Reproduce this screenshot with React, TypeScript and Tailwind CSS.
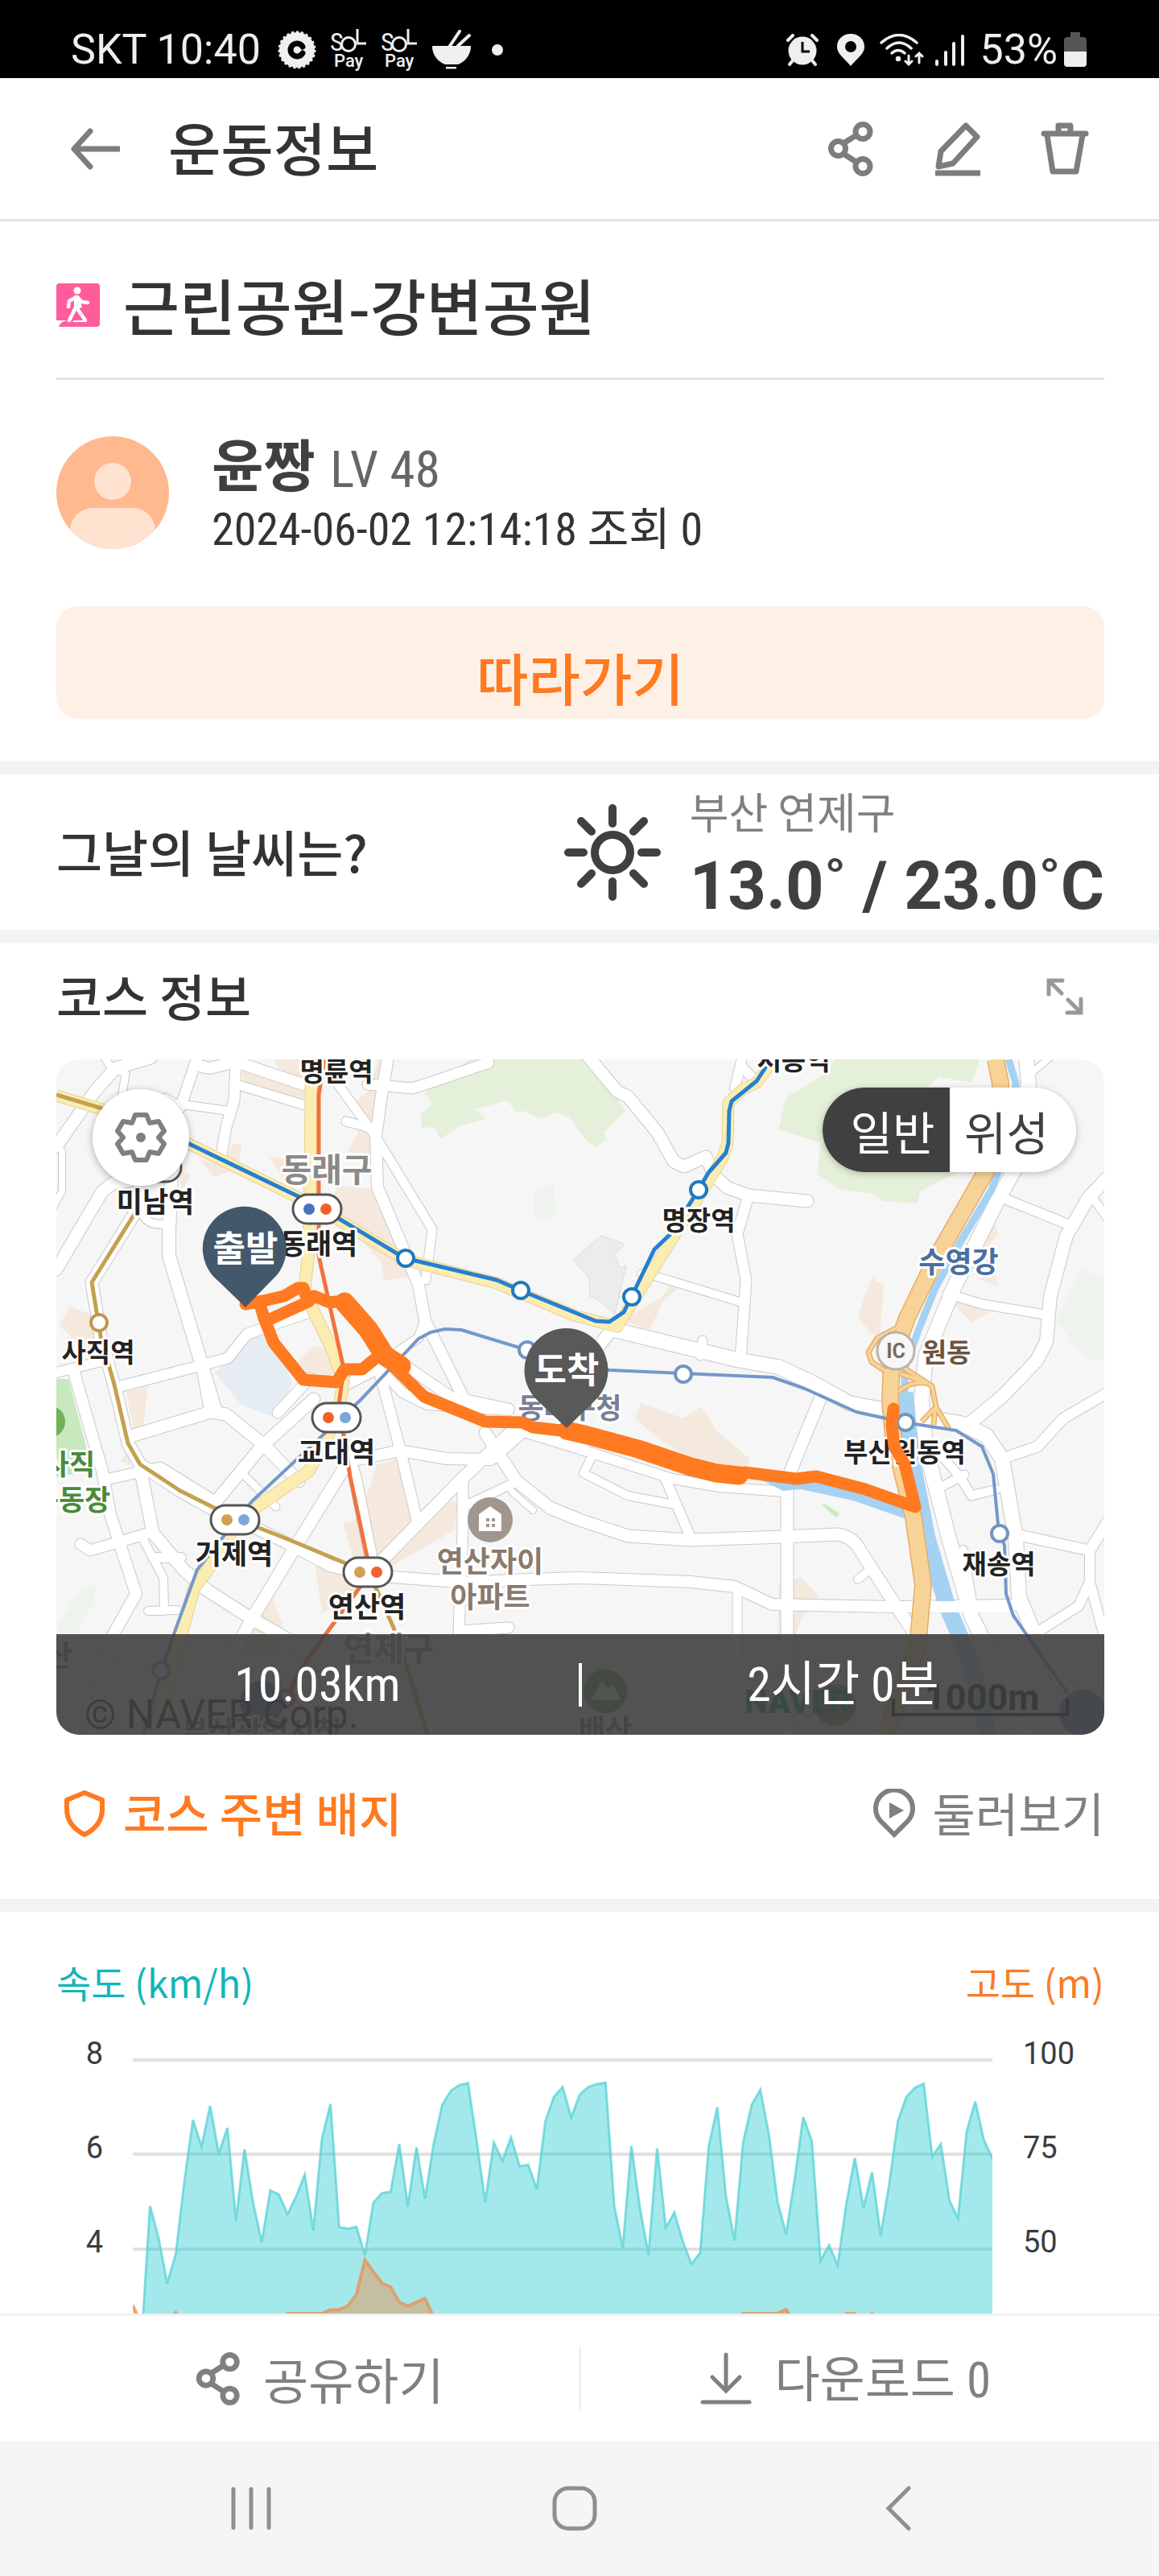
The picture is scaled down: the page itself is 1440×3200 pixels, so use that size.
import { useState } from "react";
import { clsx } from "clsx";

const narrow = "font-['Roboto_Condensed','Noto_Sans_CJK_KR',sans-serif]";

type Road = { d: string; w: number };

const roads: Road[] = [
  { w: 15, d: "M70 1424 L117 1357 L143 1327 L187 1314" },
  { w: 9, d: "M130 1314 L138 1326 L156 1334 L150 1370" },
  { w: 13, d: "M245 1314 L224 1376 L205 1365" },
  { w: 14, d: "M243 1323 L260 1327 L293 1319 L385 1350" },
  { w: 13, d: "M293 1321 L291 1367 L281 1400 L274 1440" },
  { w: 10, d: "M227 1372 L284 1380" },
  { w: 11, d: "M297 1348 L382 1374" },
  { w: 11, d: "M420 1347 L467 1412 L537 1527 L529 1590" },
  { w: 14, d: "M482 1314 L473 1367 L467 1412 L469 1475 L520 1596 L528 1640 L580 1745" },
  { w: 11, d: "M528 1640 L520 1662 L490 1682" },
  { w: 13, d: "M457 1347 L512 1352 L540 1343 L607 1320" },
  { w: 11, d: "M430 1393 L466 1403" },
  { w: 16, d: "M213 1455 L210 1530 L210 1560 L250 1693 L267 1750" },
  { w: 15, d: "M70 1577 L127 1480 L140 1470 L190 1462" },
  { w: 8, d: "M77 1430 L77 1480 L66 1500" },
  { w: 10, d: "M175 1500 Q178 1525 210 1520" },
  { w: 15, d: "M172 1500 L114 1593 L125 1660 L147 1740 L159 1793 L174 1819 L224 1852 L270 1878" },
  { w: 13, d: "M150 1722 L247 1697 L283 1687 L307 1657 L384 1630" },
  { w: 12, d: "M70 1705 L130 1690" },
  { w: 13, d: "M385 1712 L345 1755" },
  { w: 13, d: "M504 1697 L560 1735 L632 1750" },
  { w: 12, d: "M470 1698 L500 1730 L530 1745 L632 1752" },
  { w: 13, d: "M430 1720 L470 1700 L480 1735 L497 1800 L519 1892" },
  { w: 14, d: "M92 1705 L127 1827 L137 1881 L169 1980 L140 2032 L112 2155" },
  { w: 13, d: "M131 1838 L199 1823 L262 1862" },
  { w: 15, d: "M166 1783 L262 1754 L281 1757 L329 1796 L371 1840" },
  { w: 15, d: "M250 1690 L262 1754" },
  { w: 15, d: "M266 1868 L325 1797 L390 1738" },
  { w: 9, d: "M299 1828 L343 1872" },
  { w: 15, d: "M174 1823 L190 1904 L228 1950 L258 1976 L313 2011 L400 2060" },
  { w: 13, d: "M100 1918 L112 1926 L190 1903" },
  { w: 10, d: "M177 1911 L203 1960 L204 2001 L184 2001 L220 2000" },
  { w: 12, d: "M190 1935 L225 1935" },
  { w: 15, d: "M428 1823 L371 1915 L313 2011 L270 2090" },
  { w: 15, d: "M428 1795 L441 1834 L463 1945" },
  { w: 14, d: "M296 1888 L355 1916 L410 1945 L460 1957 L580 1966 L655 1962 L720 1960 L858 1965 L913 1971 L959 1993 L1110 1996 L1260 1994" },
  { w: 14, d: "M440 1814 L497 1802 L555 1812 L610 1813 L648 1780" },
  { w: 15, d: "M468 1945 L573 1838 L640 1774 L725 1800" },
  { w: 15, d: "M603 1780 L641 1839 L683 1873 L720 1888 L780 1908 L858 1913 L973 1909 L1040 1906 Q1056 1908 1065 1920 L1110 1990 L1140 2035" },
  { w: 13, d: "M575 1835 L575 1900 L570 2026 L632 2022" },
  { w: 11, d: "M575 1872 L641 1841" },
  { w: 8, d: "M636 1853 L662 1876" },
  { w: 15, d: "M978 1835 L978 2155" },
  { w: 15, d: "M1020 1735 L978 1838" },
  { w: 11, d: "M916 1976 L916 2057" },
  { w: 12, d: "M720 1800 L835 1837 L894 1847 L973 1853" },
  { w: 10, d: "M738 1804 L725 1830 L780 1858 L838 1869" },
  { w: 12, d: "M826 1835 L858 1910" },
  { w: 10, d: "M1080 1950 L1066 1962" },
  { w: 15, d: "M727 1308 L767 1356 L780 1362 L817 1407 L837 1443 L850 1449 L877 1437 L887 1460 L903 1475 L930 1485 L1003 1492" },
  { w: 13, d: "M930 1485 L916 1533 L927 1590 L920 1690" },
  { w: 10, d: "M797 1582 L810 1584 L922 1618" },
  { w: 18, d: "M763 1652 L837 1670 L920 1690 L967 1698 L1010 1718 L1055 1743 L1097 1751 L1193 1768 L1225 1783 L1245 1812 L1262 1911 L1266 1984 L1285 2030 L1345 2130" },
  { w: 11, d: "M873 1665 L870 1684" },
  { w: 12, d: "M922 1314 L913 1352 M922 1325 L940 1345" },
  { w: 15, d: "M760 1652 L730 1690" },
  { w: 18, d: "M1275 1314 L1278 1345 L1262 1450 L1240 1490 L1185 1600 L1150 1685 L1145 1740 L1150 1798 L1179 1911 L1207 2007 L1234 2064 L1275 2155" },
  { w: 12, d: "M1250 1490 L1327 1521" },
  { w: 16, d: "M1376 1463 L1353 1487 L1325 1535 L1305 1610 L1300 1667 L1288 1690 L1245 1735 L1200 1772" },
  { w: 10, d: "M1357 1487 L1375 1512" },
  { w: 11, d: "M1177 1607 L1220 1620 L1298 1633" },
  { w: 8, d: "M1304 1314 L1278 1336" },
  { w: 13, d: "M1376 1730 L1321 1762 L1289 1797 L1245 1812" },
  { w: 13, d: "M1266 1907 L1354 1926 L1376 1890" },
  { w: 12, d: "M1354 1926 L1354 1965 L1340 1995 L1285 2030 M1354 1965 L1374 2040" },
  { w: 11, d: "M1170 1808 L1193 1835 L1207 1858 L1238 1850 M1160 1852 L1198 1832" },
  { w: 10, d: "M1197 1925 L1210 2000" },
];

const stations = [
  { x: 504, y: 1563, c: "#1f78bf" },
  { x: 647, y: 1603, c: "#1f78bf" },
  { x: 785, y: 1611, c: "#1f78bf" },
  { x: 868, y: 1478, c: "#1f78bf" },
  { x: 655, y: 1677, c: "#7095c0" },
  { x: 849, y: 1707, c: "#7095c0" },
  { x: 1125, y: 1767, c: "#7095c0" },
  { x: 1242, y: 1905, c: "#7095c0" },
  { x: 200, y: 2075, c: "#7095c0" },
  { x: 123, y: 1643, c: "#c09a50" },
  { x: 355, y: 2110, c: "#f07038" },
];

const transfers = [
  { x: 394, y: 1502, a: "#4672b8", b: "#f2602c" },
  { x: 418, y: 1761, a: "#f2602c", b: "#7ba7d6" },
  { x: 292, y: 1888, a: "#d3a052", b: "#7ba7d6" },
  { x: 457, y: 1953, a: "#d3a052", b: "#f2602c" },
];

const labels = [
  { t: "명륜역", x: 418, y: 1343, s: 33, c: "#222" },
  { t: "서동역", x: 986, y: 1329, s: 33, c: "#222" },
  { t: "동래구", x: 406, y: 1468, s: 41, c: "#8a8a8a" },
  { t: "미남역", x: 193, y: 1506, s: 35, c: "#222" },
  { t: "동래역", x: 396, y: 1558, s: 35, c: "#222" },
  { t: "사직역", x: 122, y: 1692, s: 33, c: "#222" },
  { t: "명장역", x: 868, y: 1528, s: 33, c: "#222" },
  { t: "수영강", x: 1191, y: 1581, s: 36, c: "#4a6f9f" },
  { t: "원동", x: 1176, y: 1692, s: 33, c: "#6b5444" },
  { t: "교대역", x: 418, y: 1817, s: 35, c: "#222" },
  { t: "거제역", x: 291, y: 1943, s: 35, c: "#222" },
  { t: "연산역", x: 456, y: 2009, s: 35, c: "#222" },
  { t: "연산자이", x: 609, y: 1953, s: 36, c: "#8a7a6e" },
  { t: "아파트", x: 609, y: 1997, s: 36, c: "#8a7a6e" },
  { t: "사직", x: 86, y: 1832, s: 35, c: "#4a8a3c" },
  { t: "운동장", x: 89, y: 1876, s: 35, c: "#4a8a3c" },
  { t: "동래구청", x: 708, y: 1762, s: 35, c: "#7a7f95" },
  { t: "부산원동역", x: 1124, y: 1816, s: 33, c: "#222" },
  { t: "재송역", x: 1241, y: 1955, s: 33, c: "#222" },
  { t: "연제구", x: 483, y: 2063, s: 41, c: "#8a8a8a" },
  { t: "산", x: 73, y: 2070, s: 36, c: "#4a8a3c" },
  { t: "배산", x: 752, y: 2162, s: 36, c: "#4a8a3c" },
  { t: "부산광역시청", x: 325, y: 2164, s: 36, c: "#7a7f95" },
];

const speeds = [
  2.02, 2.02, 4.91, 4.23, 3.27, 3.89, 5.43, 6.73, 6.16, 7.03, 6.01, 6.56, 4.6, 6.11, 4.97, 4.14, 5.24, 5.15, 4.73,
  5.11, 5.57, 4.39, 6.33, 7.07, 4.46, 4.43, 4.47, 3.87, 4.98, 5.18, 5.21, 6.22, 4.9, 6.15, 5.06, 6.22, 7.05, 7.35,
  7.47, 7.51, 6.28, 4.99, 6.25, 5.86, 6.36, 5.75, 5.78, 5.26, 6.7, 7.22, 7.43, 6.78, 7.27, 7.43, 7.49, 7.52, 4.91,
  4.02, 6.18, 4.86, 3.87, 6.13, 4.45, 4.77, 4.15, 3.68, 3.92, 6.16, 7.0, 5.11, 4.18, 6.25, 7.05, 7.37, 6.42, 5.0,
  4.31, 5.48, 6.79, 6.28, 3.75, 4.08, 3.65, 4.94, 5.93, 4.87, 5.62, 4.28, 5.37, 6.7, 7.22, 7.41, 7.5, 5.95, 6.22,
  5.03, 4.64, 6.48, 7.12, 6.31, 5.91,
];

// metres, by sample index; the rest stays at 30m
const hills: Record<number, number> = {
  0: 35.2, 5: 33.2, 18: 33, 19: 33, 20: 33, 21: 33, 22: 33, 23: 34, 24: 34, 25: 35, 26: 38, 27: 47.2, 28: 44, 29: 41,
  30: 40, 31: 36, 32: 35, 33: 36, 34: 37, 35: 32, 71: 33, 72: 33, 73: 33, 74: 33, 75: 33, 76: 34.1, 83: 33, 84: 33,
  86: 33,
};

const speedY = (v: number) => 29 + (8 - v) * 58.7;
const elevationY = (m: number) => 29 + (100 - m) * 4.7;
const toPoints = (ys: number[]) => ys.map((y, i) => `${(i * 10.68).toFixed(1)},${y.toFixed(1)}`).join(" ");

const speedLine = toPoints(speeds.map(speedY));
const elevationLine = toPoints(speeds.map((_, i) => elevationY(hills[i] ?? 30)));

const ShareIcon = ({ className }: { className: string }) => (
  <svg viewBox="0 0 56 68" className={className} fill="none" stroke="currentColor" strokeWidth="7" aria-hidden="true">
    <path d="M19 27 L35 17 M19 40 L36 51" />
    <circle cx="12.500" cy="33.500" r="9" />
    <circle cx="43" cy="12.500" r="9" />
    <circle cx="43" cy="55.500" r="9" />
  </svg>
);

const SolPay = () => (
  <svg viewBox="0 0 46 52" className="h-[52px] w-[46px] overflow-visible" fill="#efefef" aria-hidden="true">
    <text x="0" y="27" fontSize="32" fontFamily="'Roboto Condensed', sans-serif">S</text>
    <circle cx="23" cy="19" r="8.500" fill="none" stroke="#efefef" strokeWidth="3" />
    <path d="M34 0 V18 H45" fill="none" stroke="#efefef" strokeWidth="3" />
    <text x="5" y="47" fontSize="22" fontWeight="500" fontFamily="Roboto, sans-serif">Pay</text>
  </svg>
);

const StatusBar = () => (
  <div className="flex h-[97px] items-center justify-between bg-black pt-[26px] pr-[90px] pl-[88px] text-[#efefef]">
    <div className="flex items-center gap-[17px]">
      <span className="font-[Roboto,sans-serif] text-[52px] leading-none">SKT 10:40</span>
      <svg viewBox="0 0 48 48" className="ml-1 size-12" aria-hidden="true">
        <circle cx="24" cy="24" r="22" fill="#efefef" />
        <circle cx="24" cy="24" r="22" fill="none" stroke="#efefef" strokeWidth="3" strokeDasharray="3 3" />
        <path d="M31 20 A8 8 0 1 0 31 28" fill="none" stroke="#000" strokeWidth="7" strokeLinecap="round" />
      </svg>
      <SolPay />
      <SolPay />
      <svg viewBox="0 0 50 50" className="size-[50px]" fill="#efefef" aria-hidden="true">
        <path d="M1 20 H49 A24 24 0 0 1 33 43 H17 A24 24 0 0 1 1 20 Z M18 46 H31 V48.500 H18 Z" />
        <path d="M23 20 L35 2 M33 20 L47 7" stroke="#efefef" strokeWidth="4" strokeLinecap="round" />
      </svg>
      <span className="ml-2 size-[14px] rounded-full bg-[#efefef]" />
    </div>
    <div className="flex items-center">
      <svg viewBox="0 0 40 40" className="size-10" aria-hidden="true">
        <path d="M2 8 L8 2 M38 8 L32 2 M8 33 L4 38 M32 33 L36 38" stroke="#efefef" strokeWidth="4" strokeLinecap="round" />
        <circle cx="20" cy="21" r="17.500" fill="#efefef" />
        <path d="M20 10 V22 H29" stroke="#000" strokeWidth="3" fill="none" />
      </svg>
      <svg viewBox="0 0 34 40" className="ml-[23px] h-10 w-[34px]" aria-hidden="true">
        <path
          fillRule="evenodd"
          d="M17 0 C7 0 0 7 0 16 C0 25 8 29 17 40 C26 29 34 25 34 16 C34 7 27 0 17 0 Z M17 9 A7 7 0 1 1 17 23 A7 7 0 1 1 17 9 Z"
          fill="#efefef"
        />
      </svg>
      <svg viewBox="0 0 56 40" className="ml-[19px] h-10 w-14" fill="none" stroke="#efefef" strokeWidth="3.500" strokeLinecap="round" aria-hidden="true">
        <path d="M2 11 Q24 -8 46 11 M9 18 Q24 4 39 18 M15 24 Q23 17 31 24" />
        <circle cx="23" cy="31" r="1.500" fill="#efefef" />
        <path d="M36 27 V38 M32 34 L36 38 L40 34 M49 36 V24 M45 28 L49 24 L53 28" strokeWidth="3" />
      </svg>
      <svg viewBox="0 0 38 40" className="ml-3 h-10 w-[38px]" stroke="#efefef" strokeWidth="4" strokeLinecap="round" aria-hidden="true">
        <path d="M3 34 V38 M14 23 V38 M24 12 V38 M35 3 V38" />
      </svg>
      <span className="ml-[18px] font-[Roboto,sans-serif] text-[52px] leading-none">53%</span>
      <svg viewBox="0 0 28 43" className="ml-2 h-[43px] w-7" aria-hidden="true">
        <path d="M8 0 H20 V6 H24 Q28 6 28 10 V24 H0 V10 Q0 6 4 6 H8 Z" fill="#555" />
        <path d="M0 24 H28 V39 Q28 43 24 43 H4 Q0 43 0 39 Z" fill="#efefef" />
      </svg>
    </div>
  </div>
);

const Header = () => (
  <header className="flex h-[178px] items-center border-b-[3px] border-[#e3e3e3] pr-[81px] pl-[86px] text-[#7d7d7d]">
    <button type="button" aria-label="뒤로">
      <svg viewBox="0 0 64 52" className="h-[52px] w-16" fill="none" stroke="currentColor" strokeWidth="7" aria-hidden="true">
        <path d="M26 4 L6 26 L26 48" strokeLinecap="round" strokeLinejoin="round" />
        <path d="M6 26 H63" />
      </svg>
    </button>
    <h1 className="ml-[59px] flex-1 pb-2 text-[71px] leading-[80px] font-medium text-[#333]">운동정보</h1>
    <div className="flex items-center gap-[61px]">
      <button type="button" aria-label="공유" className="flex w-[72px] justify-center">
        <ShareIcon className="h-[68px] w-14" />
      </button>
      <button type="button" aria-label="수정" className="flex w-[72px] justify-center">
        <svg viewBox="0 0 56 68" className="h-[68px] w-14" fill="none" stroke="currentColor" strokeWidth="7" aria-hidden="true">
          <path d="M38 5 L52 19 L22 52 L4 56 L7 37 Z" strokeLinejoin="round" />
          <path d="M0 64 H56" />
        </svg>
      </button>
      <button type="button" aria-label="삭제" className="flex w-[72px] justify-center">
        <svg viewBox="0 0 60 68" className="h-[68px] w-[60px]" fill="none" stroke="currentColor" strokeWidth="7" aria-hidden="true">
          <path d="M4 15 H56" strokeLinecap="round" />
          <path d="M22 14 V5 H37 V14" strokeLinejoin="round" />
          <path d="M8 17 L15 62 H44 L52 17" strokeLinejoin="round" />
        </svg>
      </button>
    </div>
  </header>
);

const CourseMap = () => (
  <svg viewBox="70 1316 1302 839" className="block h-auto w-full bg-[#f6f6f6]" role="img" aria-label="코스 지도">
    {/* ground areas */}
    <g fill="#e5f0da">
      <path d="M583 1316 H727 L760 1353 L777 1380 L750 1407 L753 1415 L740 1425 L730 1418 L707 1388 L690 1382 L672 1390 L650 1380 L642 1382 L630 1367 L590 1378 L603 1390 L573 1398 L547 1415 L540 1400 L524 1401 L523 1385 L537 1370 L527 1358 Z" />
      <path d="M1037 1316 H1217 L1207 1345 L1167 1338 L1150 1352 L1190 1456 L1143 1480 L1140 1495 L1097 1492 L1083 1483 L1043 1477 L1015 1458 L1020 1420 L967 1403 L977 1363 L1027 1333 Z" />
    </g>
    <path d="M70 1713 H85 L115 1827 L70 1835 Z M476 1852 L494 1847 L496 1854 L478 1855 Z M1022 1867 L1043 1880 L1039 1885 L1023 1871 Z" fill="#c8e8be" />
    <path d="M70 2020 L100 1975 L118 1969 V1988 L90 2040 L70 2060 Z M1345 1575 L1372 1590 V1690 L1350 1690 L1312 1640 Z M663 1480 L688 1470 L692 1510 L665 1515 Z" fill="#eff3ee" />
    <path d="M267 1705 L320 1655 L343 1667 L363 1717 L345 1762 L300 1745 Z" fill="#e5ecf4" />
    <g fill="#f5e8dd">
      <path d="M300 1322 L380 1350 L377 1370 L303 1350 Z" />
      <path d="M247 1440 L273 1447 L290 1420 L300 1423 L297 1450 L267 1463 Z" />
      <path d="M420 1473 L470 1477 L497 1553 L508 1587 L477 1590 L473 1567 L430 1520 L412 1490 Z" />
      <path d="M432 1430 L450 1397 L463 1410 V1440 Z M440 1370 L465 1350 L468 1400 Z M470 1316 H482 L478 1340 L462 1340 Z" />
      <path d="M340 1316 H382 V1345 L350 1332 Z M335 1437 L360 1440 L352 1465 Z M222 1450 L237 1460 L225 1480 Z" />
      <path d="M74 1647 L87 1623 L113 1633 L123 1667 L110 1680 Z" />
      <path d="M367 1693 L390 1672 L410 1677 L420 1700 L407 1713 L377 1710 Z" />
      <path d="M157 1728 L184 1722 L178 1770 L166 1776 Z M150 1815 L160 1800 L162 1820 Z" />
      <path d="M460 1846 L468 1820 L493 1812 L519 1892 L544 1865 L569 1865 L565 1900 L480 1950 L400 2005 L392 1945 L440 1940 L426 1892 L440 1890 Z" />
      <path d="M320 2011 L338 1984 L355 2030 L345 2050 L300 2060 Z" />
      <path d="M789 1762 L796 1743 L849 1762 L871 1747 L890 1777 L931 1812 L927 1828 L858 1812 L821 1789 Z" />
      <path d="M968 1969 L995 1959 L1018 1984 L995 2011 L986 2040 L966 2040 Z" />
      <path d="M773 1640 L820 1613 L843 1587 L852 1590 L823 1618 L807 1652 Z" />
      <path d="M1083 1587 L1098 1597 L1093 1658 L1082 1657 L1066 1635 Z M1177 1613 L1230 1630 L1207 1642 Z M1233 1513 L1241 1533 L1225 1550 L1241 1598 L1218 1590 L1215 1550 Z" />
    </g>
    <path
      d="M747 1535 L776 1545 L764 1558 L770 1575 L778 1572 L764 1633 L748 1618 L733 1610 L732 1587 L712 1565 Z"
      fill="#ececec"
      stroke="#dcdcdc"
    />

    {/* streets: grey edge below, white surface on top */}
    <g fill="none" stroke="#c9c9c9" strokeLinejoin="round" strokeLinecap="round">
      {roads.map((road) => (
        <path key={road.d} d={road.d} strokeWidth={road.w + 2} />
      ))}
    </g>
    <g fill="none" stroke="#fff" strokeLinejoin="round" strokeLinecap="round">
      {roads.map((road) => (
        <path key={road.d} d={road.d} strokeWidth={road.w} />
      ))}
    </g>

    {/* river */}
    <g fill="none" stroke="#a5d1f3">
      <path d="M1253 1316 L1262 1345 L1260 1400 L1232 1478 L1192 1545 L1162 1600 L1142 1650 L1124 1700 V1740" strokeWidth="9" />
      <path d="M1124 1730 L1133 1815 L1152 1911 L1177 1996 L1206 2064 L1228 2155" strokeWidth="21" />
    </g>
    <path d="M925 1828 L1014 1831 L1119 1862 L1126 1887 L1060 1864 L995 1850 L973 1852 Z" fill="#a5d1f3" />
    <path d="M1090 1996 H1260" stroke="#fff" strokeWidth="14" />

    {/* main roads */}
    <g fill="none" strokeLinejoin="round">
      <path d="M387 1316 L385 1500 L383 1560 L378 1605 L413 1677 L427 1715 L422 1745 L409 1780 L384 1827 L296 1888 L270 1934 L241 1973 L216 2064 L190 2155" stroke="#ead095" strokeWidth="16" />
      <path d="M387 1316 L385 1500 L383 1560 L378 1605 L413 1677 L427 1715 L422 1745 L409 1780 L384 1827 L296 1888 L270 1934 L241 1973 L216 2064 L190 2155" stroke="#fbedb2" strokeWidth="14" />
      <path d="M70 1361 L127 1378 L233 1420 L393 1499 L503 1565 L617 1594 L713 1634 L767 1648 L897 1440 L904 1420 L905 1370 L923 1353 L940 1345 L955 1325" stroke="#ead095" strokeWidth="15" />
      <path d="M70 1361 L127 1378 L233 1420 L393 1499 L503 1565 L617 1594 L713 1634 L767 1648 L897 1440 L904 1420 L905 1370 L923 1353 L940 1345 L955 1325" stroke="#fbedb2" strokeWidth="13" />
      <path d="M1237 1316 L1243 1345 L1243 1400 L1225 1455 L1163 1563 L1127 1637 L1108 1690 L1106 1740 L1110 1785 L1135 1885 L1147 1969 L1140 2045 L1101 2155" stroke="#e6ad68" strokeWidth="22" />
      <path d="M1237 1316 L1243 1345 L1243 1400 L1225 1455 L1163 1563 L1127 1637 L1108 1690 L1106 1740 L1110 1785 L1135 1885 L1147 1969 L1140 2045 L1101 2155" stroke="#f8d398" strokeWidth="19" />
      <path d="M1113 1650 L1090 1662 L1079 1680 L1083 1692 L1100 1703 M1118 1696 L1158 1722 L1163 1748 L1145 1766 M1117 1728 Q1130 1716 1150 1718 M1118 1706 L1146 1716 M1163 1748 L1179 1775 M1162 1750 L1160 1770" stroke="#e6ad68" strokeWidth="7" />
      <path d="M1113 1650 L1090 1662 L1079 1680 L1083 1692 L1100 1703 M1118 1696 L1158 1722 L1163 1748 L1145 1766 M1117 1728 Q1130 1716 1150 1718 M1118 1706 L1146 1716 M1163 1748 L1179 1775 M1162 1750 L1160 1770" stroke="#f8d398" strokeWidth="4" />
    </g>

    {/* metro lines */}
    <g fill="none" strokeLinejoin="round" strokeWidth="5">
      <path d="M70 1360 L127 1377 M172 1500 L114 1593 L125 1660 L142 1720 L159 1793 L174 1819 L224 1852 L266 1873 L296 1888 L355 1911 L439 1946 L460 1957 L489 2022 L506 2072 L531 2155" stroke="#c4a14f" />
      <path d="M403 1316 L396 1360 L396 1560 L427 1700 L421 1745 L435 1834 L456 1934 L449 1969 L380 2064 L355 2110 L334 2155" stroke="#f0733c" />
      <path d="M178 2155 L200 2077 L216 2030 L245 1950 L279 1907 L313 1865 L447 1740 L520 1663 L535 1655 L553 1651 L573 1652 L655 1677 L757 1702 L848 1706 L960 1711 L1000 1725 L1064 1754 L1124 1767 L1188 1777 L1220 1797 L1234 1831 L1241 1904 L1248 1919 L1250 1980 L1259 2007 L1326 2103" stroke="#7598ca" strokeWidth="4" />
      <path d="M127 1377 L233 1420 L393 1497 L503 1563 L617 1590 L647 1603 L740 1641 L757 1642 L775 1630 L785 1610 L813 1552 L833 1533 L868 1478 L880 1457 L902 1432 L905 1420 L906 1380 L909 1368 L940 1343 L953 1323" stroke="#2580d3" />
    </g>
    {stations.map((s) => (
      <circle key={`${s.x}-${s.y}`} cx={s.x} cy={s.y} r="10" fill="#fff" stroke={s.c} strokeWidth="4" />
    ))}
    {transfers.map((s) => (
      <g key={`${s.x}-${s.y}`}>
        <rect x={s.x - 30} y={s.y - 18} width="60" height="36" rx="18" fill="#fff" stroke="#555" strokeWidth="3" />
        <circle cx={s.x - 10} cy={s.y} r="7" fill={s.a} />
        <circle cx={s.x + 11} cy={s.y} r="7" fill={s.b} />
      </g>
    ))}
    <rect x="165" y="1432" width="60" height="36" rx="18" fill="#fff" stroke="#555" strokeWidth="3" />

    {/* places */}
    <circle cx="61" cy="1766" r="20" fill="#6fb257" />
    <circle cx="609" cy="1888" r="28" fill="#a0968e" />
    <path d="M595 1902 V1881 L609 1871 L623 1881 V1902 Z" fill="#fff" />
    <path d="M604 1886 h4 v4 h-4 Z M611 1886 h4 v4 h-4 Z M604 1893 h4 v4 h-4 Z M611 1893 h4 v4 h-4 Z" fill="#a0968e" />
    <circle cx="1113" cy="1678" r="23" fill="#f8f7f5" stroke="#b9b3ab" strokeWidth="3" />
    <text x="1113" y="1687" fontSize="25" fontWeight="700" textAnchor="middle" fill="#786a5c" fontFamily="Roboto, sans-serif">IC</text>
    <circle cx="752" cy="2101" r="27" fill="#5da046" />
    <path d="M734 2112 L748 2088 L756 2098 L761 2093 L772 2112 Z" fill="#fff" />
    <circle cx="325" cy="2115" r="27" fill="#5e7aa8" />
    <circle cx="1038" cy="2118" r="26" fill="#a08070" />
    <circle cx="1345" cy="2128" r="29" fill="#7095c8" />
    <g fontFamily="'Noto Sans CJK KR', sans-serif" fontWeight="700" textAnchor="middle" stroke="#fff" strokeWidth="6" strokeLinejoin="round" paintOrder="stroke">
      {labels.map((l) => (
        <text key={l.t} x={l.x} y={l.y} fontSize={l.s} fill={l.c}>{l.t}</text>
      ))}
    </g>
    <text x="105" y="2147" fontSize="50" fontFamily="Roboto, sans-serif" fill="#222">© NAVER Corp.</text>
    <text x="925" y="2128" fontSize="41" fontWeight="900" fontFamily="Roboto, sans-serif" fill="#03a55a">NAVER</text>
    <text x="1149" y="2124" fontSize="45" fontWeight="700" fontFamily="Roboto, sans-serif" fill="#111">1000m</text>
    <path d="M1110 2110 V2130 H1326 V2110" fill="none" stroke="#111" strokeWidth="4" />

    {/* walked route */}
    <g fill="none" stroke="#ff7a20" strokeLinejoin="round" strokeLinecap="round" strokeWidth="15">
      <path d="M305 1620 L327 1616 L353 1610 L370 1600 L377 1600 L383 1617 L335 1639 L328 1637 L322 1617" />
      <path d="M328 1637 L340 1668 L377 1714 L418 1717 L428 1701 L450 1701 L473 1682" />
      <path d="M383 1617 L390 1610 L410 1618 L425 1616" />
      <path d="M428 1618 L458 1652 L478 1684 L498 1697" strokeWidth="25" />
      <path d="M473 1682 L527 1735 L603 1766 L649 1767 L662 1773 L705 1778" />
      <path d="M704 1777 L730 1783 L793 1800 L858 1822 L890 1830 L918 1833" strokeWidth="23" />
      <path d="M925 1829 L990 1837 L1014 1834 L1075 1850 L1137 1872 L1124 1819 L1111 1797 L1108 1770 L1110 1750" />
    </g>

    <g fill="#fff" fontFamily="'Noto Sans CJK KR', sans-serif" fontSize="44" fontWeight="700" textAnchor="middle">
      <path d="M305 1624 L272 1592 A52 52 0 1 1 338 1590 Z" fill="#44586b" />
      <text x="305" y="1567">출발</text>
      <path d="M704 1774 L669 1741 A52 52 0 1 1 738 1741 Z" fill="#595959" />
      <text x="704" y="1718">도착</text>
    </g>
  </svg>
);

const Course = () => {
  const [satellite, setSatellite] = useState(false);

  return (
    <section className="pr-[68px] pl-[70px]">
      <div className="mb-3 flex h-[132px] items-center justify-between pr-[24px]">
        <h2 className="pb-1 text-[62px] leading-[80px] font-medium text-[#333]">코스 정보</h2>
        <button type="button" aria-label="크게 보기" className="text-[#999]">
          <svg viewBox="0 0 50 50" className="size-[50px]" fill="none" stroke="currentColor" strokeWidth="5" strokeLinecap="round" aria-hidden="true">
            <path d="M5 22 V5 H22 M6 6 L21 21 M45 28 V45 H28 M44 44 L29 29" />
          </svg>
        </button>
      </div>
      <div className="relative overflow-hidden rounded-[28px]">
        <CourseMap />
        <button type="button" aria-label="지도 설정" className="absolute top-[37px] left-[45px] flex size-[120px] items-center justify-center rounded-full bg-white text-[#808080] shadow-[0_2px_10px_rgba(0,0,0,0.3)]">
          <svg viewBox="0 0 64 64" className="size-16" fill="none" stroke="currentColor" strokeWidth="6" strokeLinejoin="round" aria-hidden="true">
            <path d="M25 4 H39 L43 14 L54 12 L61 24 L54 32 L61 40 L54 52 L43 50 L39 60 H25 L21 50 L10 52 L3 40 L10 32 L3 24 L10 12 L21 14 Z" />
            <circle cx="32" cy="32" r="6" fill="currentColor" stroke="none" />
          </svg>
        </button>
        <div className="absolute top-[35px] right-[35px] flex h-[105px] overflow-hidden rounded-full bg-white text-[57px] leading-[98px] shadow-[0_2px_8px_rgba(0,0,0,0.25)]">
          <button
            type="button"
            onClick={() => setSatellite(false)}
            className={clsx("w-[158px] pl-4", satellite ? "text-[#404040]" : "bg-[#404040] text-white")}
          >
            일반
          </button>
          <button
            type="button"
            onClick={() => setSatellite(true)}
            className={clsx("w-[157px] pr-4", satellite ? "bg-[#404040] text-white" : "text-[#404040]")}
          >
            위성
          </button>
        </div>
        <div className={clsx("absolute inset-x-0 bottom-0 flex h-[125px] items-center bg-[#404040]/90 text-[60px] text-white", narrow)}>
          <span className="flex-1 text-center">10.03km</span>
          <span className="h-[54px] w-1 bg-white" />
          <span className="flex-1 text-center">2시간 0분</span>
        </div>
      </div>
      <div className="mb-2 flex h-[196px] items-center justify-between text-[58px] leading-[76px]">
        <button type="button" className="flex items-center gap-[22px] pl-[9px] font-medium text-[#ff7a20]">
          <svg viewBox="0 0 52 60" className="h-[60px] w-[52px]" fill="none" stroke="currentColor" strokeWidth="6" strokeLinejoin="round" aria-hidden="true">
            <path d="M26 4 L48 13 V24 Q48 45 26 56 Q4 45 4 24 V13 Z" />
          </svg>
          <span className="pb-1">코스 주변 배지</span>
        </button>
        <button type="button" className="flex items-center gap-[22px] text-[#808080]">
          <svg viewBox="0 0 52 62" className="h-[62px] w-[52px]" fill="none" stroke="currentColor" strokeWidth="6" aria-hidden="true">
            <path d="M26 57 L9 40 A23 23 0 1 1 43 40 Z" />
            <path d="M20 17 L38 27 L20 37 Z" fill="currentColor" stroke="none" />
          </svg>
          <span className="pb-1">둘러보기</span>
        </button>
      </div>
    </section>
  );
};

const SpeedChart = () => (
  <section className="pt-[57px] pr-[68px] pl-[70px]">
    <div className="flex justify-between text-[47px] leading-[60px]">
      <h2 className="text-[#12b5bb]">속도 (km/h)</h2>
      <h2 className="text-[#fa7b26]">고도 (m)</h2>
    </div>
    <div className="mt-[38px] flex h-[344px] overflow-hidden font-[Roboto,sans-serif] text-[38px] leading-[42px] text-[#373d41]">
      <div className="w-[95px] text-center">
        <div className="h-[117px]">8</div>
        <div className="h-[117px]">6</div>
        <div>4</div>
      </div>
      <svg viewBox="0 0 1068 344" preserveAspectRatio="none" className="h-[344px] min-w-0 flex-1" role="img" aria-label="속도와 고도 그래프">
        <path d="M0 29 H1068 M0 146 H1068 M0 264 H1068" stroke="#e1e1e1" strokeWidth="4" />
        <polygon points={`0,500 ${speedLine} 1068,500`} fill="#19c8cd" fillOpacity="0.4" />
        <polyline points={speedLine} fill="none" stroke="#5fd3d8" strokeOpacity="0.8" strokeWidth="3" />
        <polygon points={`0,500 ${elevationLine} 1068,500`} fill="#ff741b" fillOpacity="0.36" />
        <polyline points={elevationLine} fill="none" stroke="#e8935c" strokeOpacity="0.8" strokeWidth="4" />
      </svg>
      <div className="w-[139px] pl-[38px]">
        <div className="h-[117px]">100</div>
        <div className="h-[117px]">75</div>
        <div>50</div>
      </div>
    </div>
  </section>
);

const Footer = () => (
  <footer>
    <div className="flex h-[158px] items-center border-t-[3px] border-[#f1f1f1] text-[61px] leading-[80px] text-[#808080]">
      <button type="button" className="flex w-1/2 items-center justify-center gap-7 pl-[76px]">
        <ShareIcon className="h-[66px] w-14" />
        공유하기
      </button>
      <span className="h-20 w-[3px] bg-[#f0f0f0]" />
      <button type="button" className={clsx("flex w-1/2 items-center justify-center gap-7 pr-[60px]", narrow)}>
        <svg viewBox="0 0 64 66" className="h-[66px] w-16" fill="none" stroke="currentColor" strokeWidth="5" strokeLinecap="round" aria-hidden="true">
          <path d="M32 3 V48 M15 31 L32 48 L49 31" />
          <path d="M3 62 H61" />
        </svg>
        <span className="pt-1">다운로드 0</span>
      </button>
    </div>
    <nav className="grid h-[168px] grid-cols-3 items-center justify-items-center bg-[#f5f5f5] pr-[123px] pl-[111px] text-[#8f8f8f]">
      <button type="button" aria-label="최근 앱">
        <svg viewBox="0 0 50 56" className="h-14 w-[50px]" stroke="currentColor" strokeWidth="5" strokeLinecap="round" aria-hidden="true">
          <path d="M3 4 V52 M25 4 V52 M47 4 V52" />
        </svg>
      </button>
      <button type="button" aria-label="홈">
        <svg viewBox="0 0 56 56" className="size-14" fill="none" stroke="currentColor" strokeWidth="5" aria-hidden="true">
          <rect x="3" y="3" width="50" height="50" rx="17" />
        </svg>
      </button>
      <button type="button" aria-label="이전">
        <svg viewBox="0 0 32 56" className="h-14 w-8" fill="none" stroke="currentColor" strokeWidth="5" strokeLinecap="round" aria-hidden="true">
          <path d="M29 3 L4 28 L29 53" />
        </svg>
      </button>
    </nav>
  </footer>
);

const App = () => {
  return (
    <div className="flex min-h-screen flex-col bg-white font-['Noto_Sans_CJK_KR',sans-serif]">
      <StatusBar />
      <Header />
      <main className="flex-1">
        <section className="pr-[68px] pl-[70px]">
          {/* Course title */}
          <div className="flex items-center border-b-[3px] border-[#e3e3e3] pt-[58px] pb-[45px]">
            <svg viewBox="0 0 54 54" className="size-[54px]" aria-hidden="true">
              <rect width="54" height="54" rx="4" fill="#ff5c9b" />
              <circle cx="26" cy="9" r="4.500" fill="#fff" />
              <path d="M25 18 L25 30 L36 46 M25 28 L16 46 M25 17 L16 22 L15 29 M27 18 L32 23 L39 24" fill="none" stroke="#fff" strokeWidth="4.500" strokeLinecap="round" strokeLinejoin="round" />
              <path d="M22 15 H28 L32 30 L22 33 Z" fill="#fff" />
              <path d="M0 46 H14 Q5 47 3 54 H0 Z M22 46 H36 V48 H20 Z" fill="#fff" />
            </svg>
            <h2 className="ml-[29px] text-[76px] leading-[91px] font-medium text-[#333]">근린공원-강변공원</h2>
          </div>

          {/* Walker */}
          <div className="flex items-start gap-[53px] pt-[70px]">
            <svg viewBox="0 0 140 140" className="size-[140px] shrink-0" aria-hidden="true">
              <clipPath id="avatar">
                <circle cx="70" cy="70" r="70" />
              </clipPath>
              <g clipPath="url(#avatar)">
                <rect width="140" height="140" fill="#ffb98f" />
                <circle cx="70" cy="56" r="23" fill="#ffe2d0" />
                <rect x="17" y="89" width="106" height="80" rx="28" fill="#ffe2d0" />
              </g>
            </svg>
            <div className={clsx("pt-1", narrow)}>
              <p className="h-[70px] text-[63px] leading-[70px] text-[#666]">
                <strong className="mr-1 text-[70px] font-bold text-[#404040]">윤짱</strong> LV 48
              </p>
              <p className="text-[56px] leading-[84px] text-[#333]">2024-06-02 12:14:18 조회 0</p>
            </div>
          </div>
          <button type="button" className="mt-[53px] mb-[52px] h-[140px] w-full rounded-[26px] bg-[#fff0e6] pt-[36px] text-[70px] leading-[100px] font-medium text-[#ff7a20]">
            따라가기
          </button>
        </section>

        {/* Weather of the day */}
        <section className="flex h-[227px] items-center justify-between border-y-[17px] border-[#f1f3f5] pr-[68px] pl-[70px]">
          <h2 className="pb-1 text-[62px] leading-[80px] font-medium text-[#333]">그날의 날씨는?</h2>
          <div className="flex items-center gap-9">
            <svg viewBox="0 0 120 120" className="size-[120px]" fill="none" stroke="#404040" strokeWidth="10" strokeLinecap="round" aria-hidden="true">
              <circle cx="60" cy="60" r="22" />
              <path d="M60 5 V24 M60 96 V115 M5 60 H24 M96 60 H115 M21 21 L34 34 M86 86 L99 99 M99 21 L86 34 M21 99 L34 86" />
            </svg>
            <div className="pb-2 text-[#404040]">
              <p className="text-[53px] leading-[56px] text-[#808080]">부산 연제구</p>
              <p className="mt-9 font-[Roboto,sans-serif] text-[83px] leading-[60px] font-bold">13.0˚ / 23.0˚C</p>
            </div>
          </div>
        </section>

        <Course />
        <div className="h-4 bg-[#f1f3f5]" />
        <SpeedChart />
      </main>
      <Footer />
    </div>
  );
};

export default App;
